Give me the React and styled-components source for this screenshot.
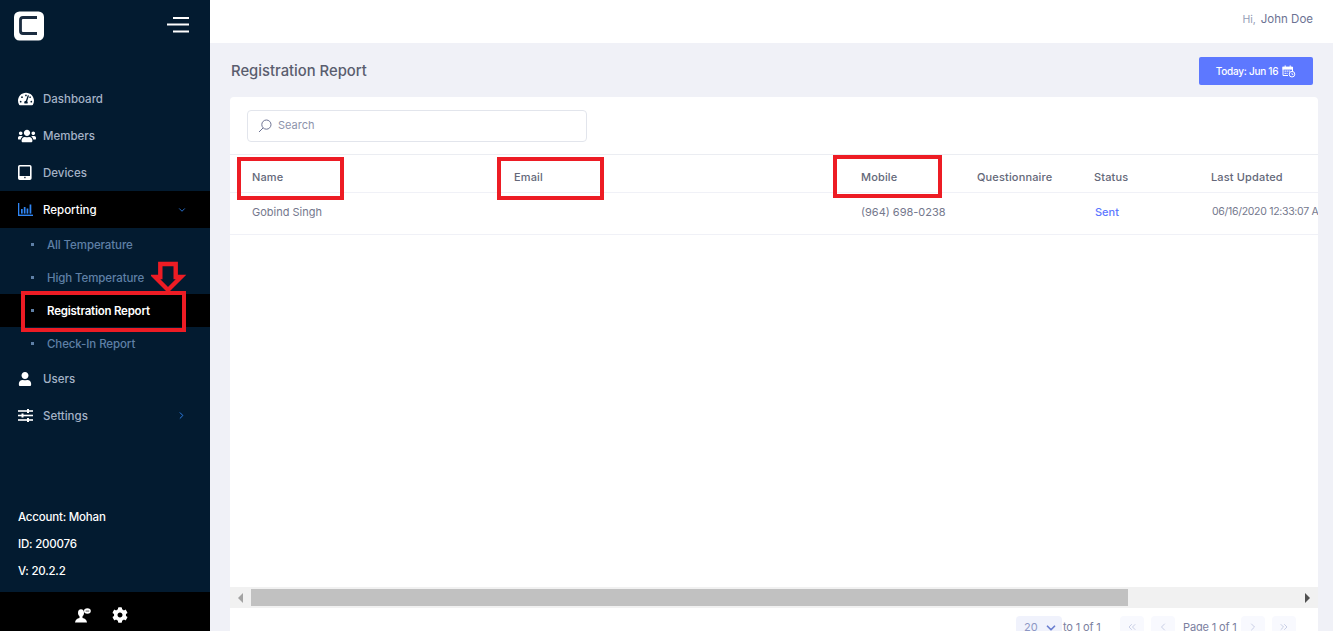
import React from "react";
import styled, { createGlobalStyle } from "styled-components";
import { FaTachometerAlt, FaUsers, FaUser, FaCog } from "react-icons/fa";
import { FiChevronDown, FiChevronRight, FiChevronLeft, FiChevronsLeft, FiChevronsRight } from "react-icons/fi";

const font = `"Inter", "Liberation Sans", sans-serif`;

const GlobalStyle = createGlobalStyle`
  html, body { margin: 0; padding: 0; height: 100%; overflow: hidden; }
  body { font-family: ${font}; background: #f0f1f7; }
  #root { height: 100%; }
  * { box-sizing: border-box; }
`;

const LogoIcon = () => (
  <svg width="30" height="30" viewBox="0 0 30 30">
    <rect x="0" y="0.5" width="30" height="29" rx="5.5" fill="#fff" />
    <path d="M23 6.5 H9 Q6.5 6.5 6.5 9 V20 Q6.5 22.5 9 22.5 H23" fill="none" stroke="#1b2c40" strokeWidth="2.8" />
  </svg>
);

const BurgerIcon = () => (
  <svg width="24" height="17" viewBox="0 0 24 17">
    <rect x="6" y="0" width="16" height="2" fill="#fff" />
    <rect x="0" y="6.5" width="22" height="2" fill="#fff" />
    <rect x="6" y="13.5" width="16" height="2" fill="#fff" />
  </svg>
);

const TabletIcon = () => (
  <svg width="14" height="15" viewBox="0 0 14 15">
    <rect x="0.8" y="0.8" width="12" height="13.4" rx="1" fill="none" stroke="#fff" strokeWidth="1.6" />
    <rect x="1" y="11" width="12" height="3" fill="#fff" />
    <rect x="6.2" y="11.8" width="1.4" height="1.4" fill="#1b2c40" />
  </svg>
);

const ChartIcon = () => (
  <svg width="15" height="13" viewBox="0 0 15 13" fill="#2f86f5">
    <rect x="0" y="0" width="1.3" height="13" />
    <rect x="0" y="11.6" width="15" height="1.4" />
    <rect x="3" y="6" width="1.7" height="4.6" />
    <rect x="5.8" y="4" width="1.7" height="6.6" />
    <rect x="8.6" y="5.5" width="1.7" height="5.1" />
    <rect x="11.6" y="1.5" width="1.7" height="9.1" />
  </svg>
);

const SlidersIcon = () => (
  <svg width="15" height="13" viewBox="0 0 15 13" fill="#fff">
    <rect x="0" y="1.2" width="15" height="1.6" />
    <rect x="0" y="5.7" width="15" height="1.6" />
    <rect x="0" y="10.2" width="15" height="1.6" />
    <rect x="9" y="0" width="2" height="4" />
    <rect x="3.5" y="4.5" width="2" height="4" />
    <rect x="9" y="9" width="2" height="4" />
  </svg>
);

const AgentIcon = () => (
  <svg width="16" height="15" viewBox="0 0 16 15" fill="#fff">
    <ellipse cx="6" cy="4.8" rx="3" ry="3.6" />
    <path d="M4.5 8 H7.5 V10 Q11.5 10.5 12 14.5 H0 Q0.5 10.5 4.5 10 Z" />
    <ellipse cx="12.4" cy="3" rx="3.4" ry="2.8" />
    <rect x="10.6" y="2.6" width="3.6" height="0.9" fill="#444" />
  </svg>
);

const CalendarIcon = () => (
  <svg width="14" height="13" viewBox="0 0 14 13" fill="none" stroke="#fff">
    <rect x="0.5" y="1.6" width="10" height="3" fill="#fff" strokeWidth="0" />
    <path d="M1 2 V10.5 H6 M10.5 2 V6" strokeWidth="1" />
    <path d="M3.2 0.4 V3 M8.2 0.4 V3" strokeWidth="1" />
    <path d="M2.6 6.2 H8 M2.6 8.4 H5.5" strokeWidth="1.2" strokeDasharray="1.2 .8" />
    <circle cx="10" cy="9.2" r="2.8" strokeWidth="1" />
    <path d="M10 7.8 V9.4 H11.3" strokeWidth=".8" />
  </svg>
);

const SearchIcon = () => (
  <svg width="14" height="14" viewBox="0 0 14 14" fill="none" stroke="#6c7293" strokeWidth="1">
    <circle cx="8.4" cy="5.6" r="4.6" />
    <path d="M5 9 L1 13" />
  </svg>
);

const DownArrow = () => (
  <svg width="36" height="33" viewBox="0 0 36 33" fill="none" stroke="#ed1c24" strokeWidth="4.4">
    <path d="M9.3 3 H24.7 V16 H30 L17 29 L4 16 H9.3 Z" />
  </svg>
);

const mainNav = [
  { label: "Dashboard", icon: <FaTachometerAlt size={16} /> },
  { label: "Members", icon: <FaUsers size={18} /> },
  { label: "Devices", icon: <TabletIcon /> },
];

const subNav = [
  { label: "All Temperature" },
  { label: "High Temperature" },
  { label: "Registration Report", active: true },
  { label: "Check-In Report" },
];

const columns = ["Name", "Email", "Mobile", "Questionnaire", "Status", "Last Updated"];

const App = () => {
  return (
    <Page>
      <GlobalStyle />
      <Sidebar>
        <Brand>
          <LogoIcon />
          <BurgerIcon />
        </Brand>
        <Nav>
          {mainNav.map((item) => (
            <NavItem key={item.label}>
              <NavIcon>{item.icon}</NavIcon>
              {item.label}
            </NavItem>
          ))}
          <NavItem $open>
            <NavIcon>
              <ChartIcon />
            </NavIcon>
            Reporting
            <Caret>
              <FiChevronDown size={10} strokeWidth={2} />
            </Caret>
          </NavItem>
          {subNav.map((item) => (
            <SubItem key={item.label} $active={item.active}>
              <Bullet />
              {item.label}
            </SubItem>
          ))}
          <NavItem>
            <NavIcon>
              <FaUser size={14} />
            </NavIcon>
            Users
          </NavItem>
          <NavItem>
            <NavIcon>
              <SlidersIcon />
            </NavIcon>
            Settings
            <Caret>
              <FiChevronRight size={11} strokeWidth={2} />
            </Caret>
          </NavItem>
        </Nav>
        <AccountInfo>
          <div>Account: Mohan</div>
          <div>ID: 200076</div>
          <div>V: 20.2.2</div>
        </AccountInfo>
        <SideFooter>
          <AgentIcon />
          <FaCog size={16} color="#fff" />
        </SideFooter>
      </Sidebar>

      <Main>
        <TopBar>
          <Hi>Hi,</Hi>
          <UserName>John Doe</UserName>
        </TopBar>
        <Content>
          <TitleRow>
            <Title>Registration Report</Title>
            <TodayButton>
              Today: Jun 16
              <CalendarIcon />
            </TodayButton>
          </TitleRow>
          <Card>
            <SearchRow>
              <SearchBox>
                <SearchIcon />
                <SearchInput placeholder="Search" />
              </SearchBox>
            </SearchRow>
            <HeadRow>
              {columns.map((c) => (
                <div key={c}>{c}</div>
              ))}
            </HeadRow>
            <BodyRow>
              <div>Gobind Singh</div>
              <div />
              <div>(964) 698-0238</div>
              <div />
              <SentCell>Sent</SentCell>
              <DateCell>06/16/2020 12:33:07 AM</DateCell>
            </BodyRow>
            <TableSpace />
            <ScrollTrack>
              <ScrollArrow $dim />
              <ScrollThumb />
              <ScrollArrow $right />
            </ScrollTrack>
            <Pager>
              <PageSize>
                20
                <FiChevronDown size={14} strokeWidth={3} />
              </PageSize>
              <PagerText $wide>to 1 of 1</PagerText>
              <PagerButton>
                <FiChevronsLeft size={12} />
              </PagerButton>
              <PagerButton>
                <FiChevronLeft size={12} />
              </PagerButton>
              <PagerText>Page 1 of 1</PagerText>
              <PagerButton>
                <FiChevronRight size={12} />
              </PagerButton>
              <PagerButton>
                <FiChevronsRight size={12} />
              </PagerButton>
            </Pager>
          </Card>
        </Content>
      </Main>

      <RedBox $x={237} $y={157} $w={107} $h={43} />
      <RedBox $x={497} $y={157} $w={107} $h={43} />
      <RedBox $x={833} $y={155} $w={109} $h={43} />
      <RedBox $x={21} $y={291} $w={165} $h={41} />
      <ArrowMark>
        <DownArrow />
      </ArrowMark>
    </Page>
  );
};

const Page = styled.div`
  position: relative;
  display: flex;
  width: 100%;
  height: 100%;
  overflow: hidden;
`;

const Sidebar = styled.aside`
  flex: 0 0 210px;
  display: flex;
  flex-direction: column;
  height: 100%;
  background: #031b30;
`;
const Brand = styled.div`
  display: flex;
  justify-content: space-between;
  align-items: center;
  height: 80px;
  padding: 0 19px 29px 14px;
`;
const Nav = styled.nav`
  display: flex;
  flex-direction: column;
`;
const NavItem = styled.div`
  display: flex;
  align-items: center;
  height: 37px;
  padding: 0 23px 0 18px;
  font-size: 11.5px;
  font-weight: 500;
  color: ${(p) => (p.$open ? "#fff" : "#a5b3c7")};
  background: ${(p) => (p.$open ? "#000" : "transparent")};
`;
const NavIcon = styled.span`
  display: flex;
  align-items: center;
  width: 25px;
  color: #fff;
`;
const Caret = styled.span`
  display: flex;
  margin-left: auto;
  color: #2f86f5;
`;
const SubItem = styled.div`
  display: flex;
  align-items: center;
  height: 33px;
  padding-left: 31px;
  font-size: 11.5px;
  letter-spacing: -0.1px;
  font-weight: ${(p) => (p.$active ? 600 : 500)};
  color: ${(p) => (p.$active ? "#fff" : "#5f80a6")};
  background: ${(p) => (p.$active ? "#000" : "transparent")};
  ${(p) => p.$active && "letter-spacing: -0.22px;"}
`;
const Bullet = styled.span`
  width: 3px;
  height: 3px;
  margin-right: 13px;
  background: #5f80a6;
`;
const AccountInfo = styled.div`
  display: flex;
  flex-direction: column;
  gap: 11px;
  margin-top: auto;
  padding: 0 18px 13px;
  font-size: 11.5px;
  line-height: 16px;
  font-weight: 500;
  letter-spacing: -0.2px;
  color: #fff;
`;
const SideFooter = styled.div`
  display: flex;
  justify-content: center;
  align-items: center;
  gap: 21px;
  flex: 0 0 39px;
  padding: 7px 7px 0 0;
  background: #000;
`;

const Main = styled.main`
  flex: 1;
  display: flex;
  flex-direction: column;
  min-width: 0;
  height: 100%;
`;
const TopBar = styled.header`
  display: flex;
  align-items: center;
  justify-content: flex-end;
  flex: 0 0 43px;
  padding: 0 20px 5px 0;
  background: #fff;
  font-size: 11.5px;
`;
const Hi = styled.span`
  margin-right: 5px;
  font-size: 10.5px;
  color: #959cb6;
`;
const UserName = styled.span`
  color: #6c7293;
`;
const Content = styled.div`
  flex: 1;
  display: flex;
  flex-direction: column;
  min-height: 0;
  padding: 14px 15px 0 20px;
`;
const TitleRow = styled.div`
  display: flex;
  justify-content: space-between;
  align-items: center;
  flex: 0 0 28px;
  margin-bottom: 12px;
  padding-right: 5px;
`;
const Title = styled.h3`
  margin: 0 0 0 1px;
  font-size: 14.8px;
  font-weight: 500;
  color: #595d6e;
`;
const TodayButton = styled.div`
  display: flex;
  align-items: center;
  justify-content: center;
  gap: 4px;
  width: 114px;
  height: 28px;
  border-radius: 2px;
  background: #5d78ff;
  color: #fff;
  font-size: 10px;
  font-weight: 500;
  letter-spacing: -0.25px;
`;
const Card = styled.section`
  flex: 1;
  display: flex;
  flex-direction: column;
  min-height: 0;
  overflow: hidden;
  border-radius: 4px 4px 0 0;
  background: #fff;
`;
const SearchRow = styled.div`
  flex: 0 0 58px;
  padding: 13px 0 0 17px;
  border-bottom: 1px solid #ebedf2;
`;
const SearchBox = styled.label`
  display: flex;
  align-items: center;
  gap: 6px;
  width: 340px;
  height: 32px;
  padding: 0 11px 0 10px;
  border: 1px solid #e2e5ec;
  border-radius: 4px;
`;
const SearchInput = styled.input`
  flex: 1;
  min-width: 0;
  height: 100%;
  border: 0;
  outline: 0;
  padding: 0 0 2px;
  font-family: ${font};
  font-size: 11px;
  &::placeholder {
    color: #8d93ab;
    opacity: 1;
  }
`;
const rowGrid = `
  display: grid;
  grid-template-columns: 262px 347px 116px 117px 117px 160px;
  align-items: center;
  padding-left: 22px;
  white-space: nowrap;
  overflow: hidden;
`;
const HeadRow = styled.div`
  ${rowGrid}
  flex: 0 0 38px;
  padding-top: 6px;
  border-bottom: 1px solid #f0f1f7;
  font-size: 11px;
  font-weight: 500;
  letter-spacing: 0.15px;
  color: #646879;
`;
const BodyRow = styled.div`
  ${rowGrid}
  flex: 0 0 42px;
  padding-bottom: 4px;
  border-bottom: 1px solid #f0f1f7;
  font-size: 11px;
  color: #74788d;
`;
const SentCell = styled.div`
  margin-left: 1px;
  font-weight: 500;
  color: #5d78ff;
`;
const DateCell = styled.div`
  margin-left: 1px;
  font-size: 10.5px;
  letter-spacing: -0.3px;
`;
const TableSpace = styled.div`
  flex: 1;
`;
const ScrollTrack = styled.div`
  display: flex;
  align-items: center;
  flex: 0 0 21px;
  background: #f1f1f1;
`;
const ScrollThumb = styled.div`
  width: 877px;
  height: 17px;
  background: #c1c1c1;
`;
const ScrollArrow = styled.span`
  width: 0;
  height: 0;
  border-style: solid;
  border-width: 5px 0 5px 5px;
  border-color: transparent transparent transparent #505050;
  margin-left: 177px;
  ${(p) =>
    p.$dim &&
    `
    border-width: 5px 5px 5px 0;
    border-color: transparent #a3a3a3 transparent transparent;
    margin: 0 8px;
  `}
`;
const Pager = styled.div`
  display: flex;
  align-items: flex-start;
  flex: 0 0 23px;
  min-height: 0;
  overflow: hidden;
  padding: 8px 21px 0 786px;
  font-size: 11px;
  color: #7b80a0;
`;
const PageSize = styled.div`
  display: flex;
  align-items: flex-start;
  gap: 6px;
  flex: 0 0 46px;
  height: 30px;
  padding: 4px 0 0 8px;
  border-radius: 4px;
  background: #f0f2fc;
  color: #8d97c4;
  line-height: 15px;
  svg {
    margin-top: 1px;
    color: #6b7fd0;
  }
`;
const PagerText = styled.div`
  flex: 0 0 ${(p) => (p.$wide ? "58px" : "59px")};
  padding: 4px 0 0 1px;
  line-height: 15px;
  letter-spacing: -0.15px;
  white-space: nowrap;
`;
const PagerButton = styled.div`
  display: flex;
  justify-content: center;
  align-items: flex-start;
  flex: 0 0 24px;
  height: 30px;
  margin-right: 7px;
  padding-top: 5px;
  border-radius: 4px;
  background: #f8f9fe;
  color: #c9cfe6;
`;

const RedBox = styled.div`
  position: absolute;
  left: ${(p) => p.$x}px;
  top: ${(p) => p.$y}px;
  width: ${(p) => p.$w}px;
  height: ${(p) => p.$h}px;
  border: 4.5px solid #ed1c24;
`;
const ArrowMark = styled.div`
  position: absolute;
  left: 151px;
  top: 261px;
  line-height: 0;
`;

export default App;
